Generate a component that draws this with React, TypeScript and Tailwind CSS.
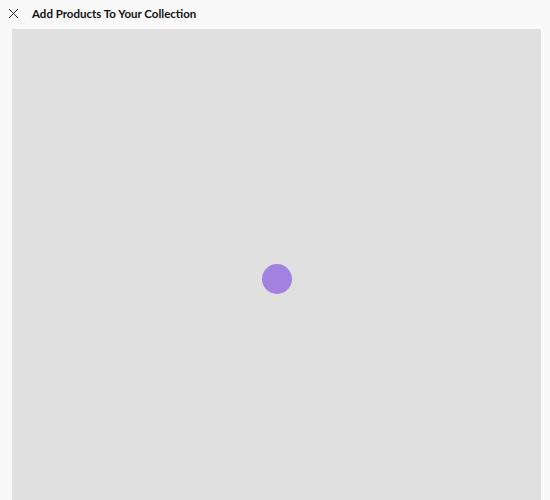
export default function App() {
  return (
    <div className="h-[500px] w-[550px] overflow-hidden bg-[#f9f9f9] font-['Lato',sans-serif]">
      <div className="flex h-[29px] items-center pb-[2px]">
        <button className="ml-[7px] flex h-[12px] w-[12px] items-center justify-center text-[#333]">
          <svg width="11" height="11" viewBox="0 0 11 11" fill="none" stroke="currentColor" strokeWidth="1">
            <path d="M1 1 L10 10 M10 1 L1 10" />
          </svg>
        </button>
        <h1 className="ml-[13px] text-[11.5px] font-bold text-[#111]">Add Products To Your Collection</h1>
      </div>
      <div className="ml-[12px] flex h-[500px] w-[529px] items-center justify-center bg-[#e0e0e0]">
        <div className="h-[30px] w-[30px] rounded-full bg-[#a381e0]" />
      </div>
    </div>
  )
}
